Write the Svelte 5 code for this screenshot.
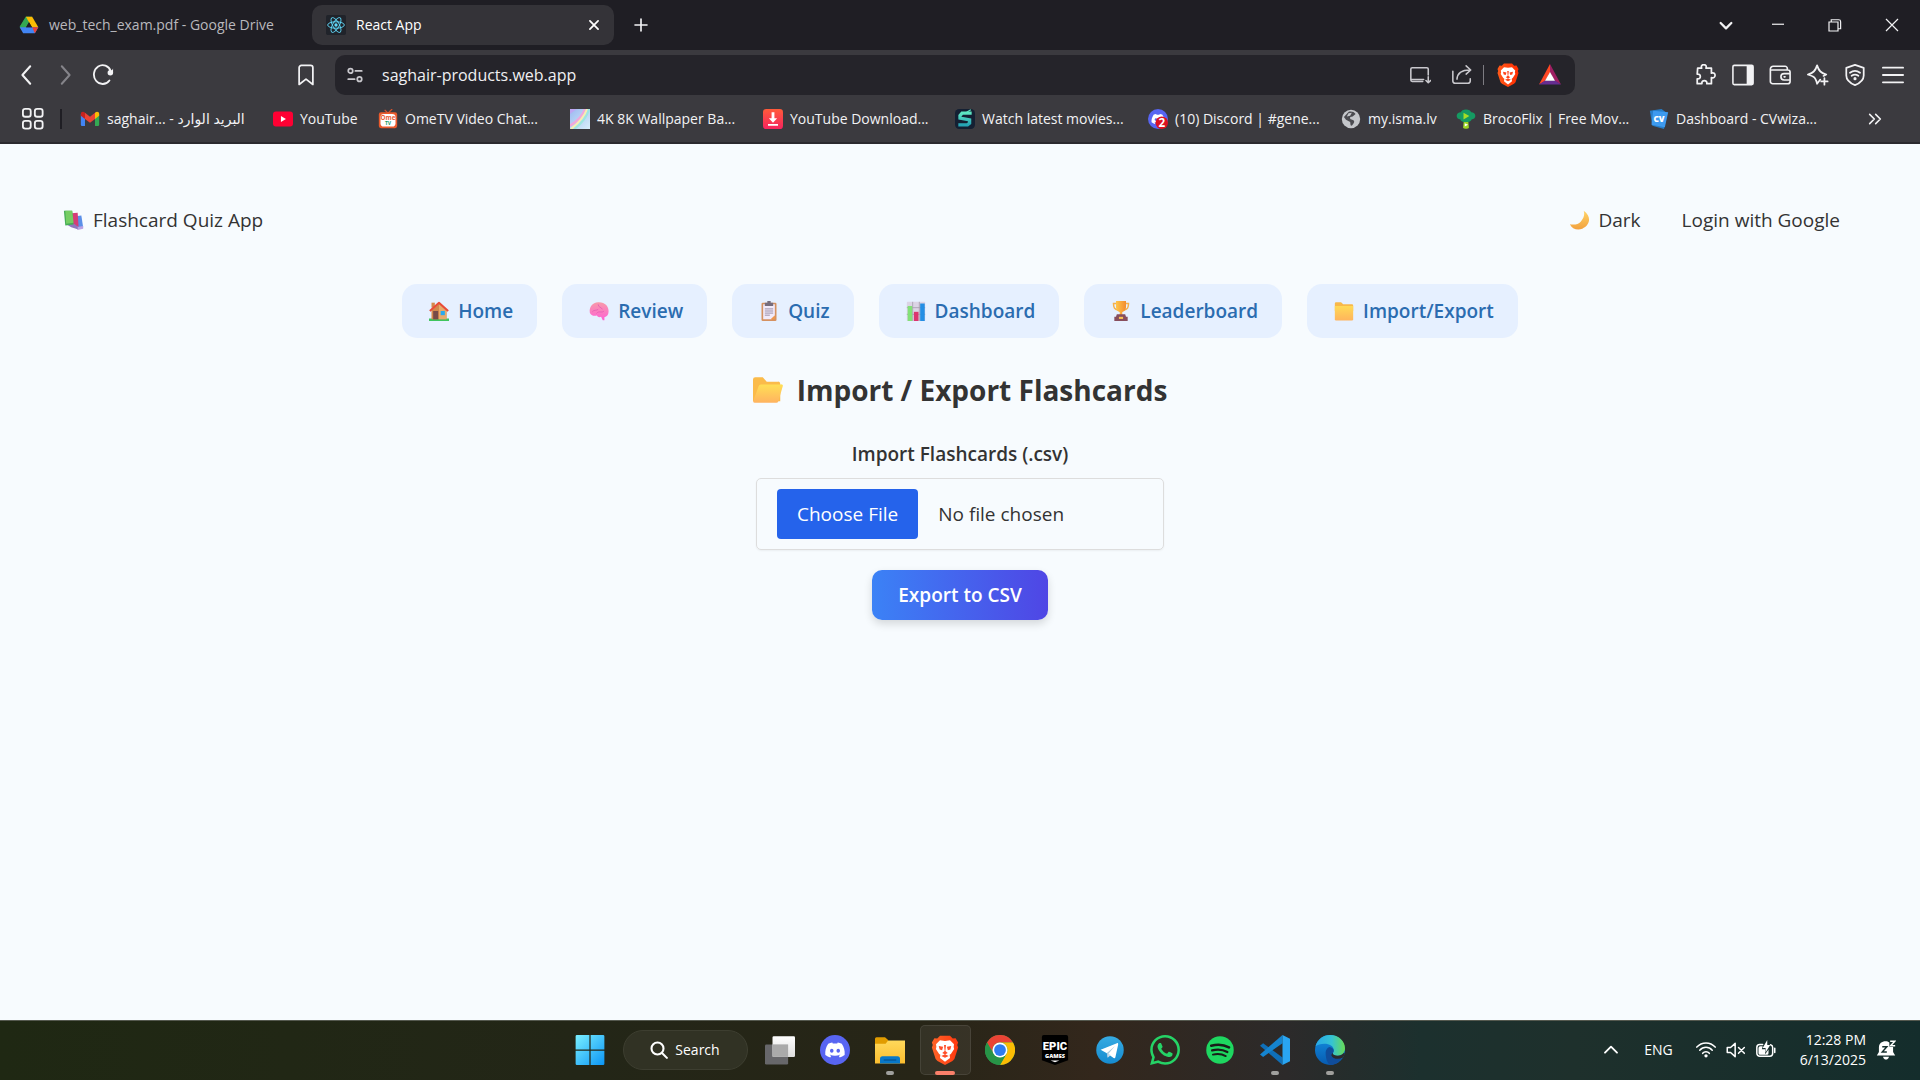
<script>
  const discordPath = 'M20.317 4.37a19.79 19.79 0 00-4.885-1.515.074.074 0 00-.079.037c-.21.375-.444.865-.608 1.25-1.845-.276-3.68-.276-5.487 0-.164-.393-.406-.874-.618-1.25a.077.077 0 00-.078-.037 19.736 19.736 0 00-4.885 1.515.07.07 0 00-.032.028C.533 9.046-.319 13.58.099 18.058a.082.082 0 00.031.056c2.053 1.508 4.041 2.423 5.993 3.03a.078.078 0 00.084-.028c.462-.63.873-1.295 1.226-1.994a.076.076 0 00-.042-.106c-.652-.248-1.274-.55-1.872-.892a.077.077 0 01-.007-.128c.126-.094.251-.192.372-.291a.074.074 0 01.077-.011c3.928 1.793 8.18 1.793 12.061 0a.074.074 0 01.079.01c.12.099.246.198.373.292a.077.077 0 01-.007.128 12.299 12.299 0 01-1.873.891.077.077 0 00-.041.107c.36.698.772 1.363 1.225 1.993a.076.076 0 00.084.029c1.961-.607 3.95-1.522 6.002-3.03a.077.077 0 00.032-.055c.5-5.177-.838-9.674-3.549-13.66a.061.061 0 00-.031-.029zM8.02 15.331c-1.183 0-2.157-1.086-2.157-2.419s.956-2.419 2.157-2.419c1.211 0 2.176 1.095 2.157 2.419 0 1.333-.956 2.419-2.157 2.419zm7.975 0c-1.183 0-2.157-1.086-2.157-2.419s.955-2.419 2.157-2.419c1.211 0 2.176 1.095 2.157 2.419 0 1.333-.946 2.419-2.157 2.419z';
  const line = 'fill="none" stroke="currentColor" stroke-linecap="round" stroke-linejoin="round"';
  const discord = `<circle cx="12" cy="12" r="12" fill="#5865f2"/><path transform="translate(4.2 4.2) scale(.65)" fill="#fff" d="${discordPath}"/>`;

  const icons = {
    drive: '<path fill="#188038" d="M8.2 2h3.9L6.3 21.5 1 13.8z"/><path fill="#34a853" d="M8.2 2h7.6L5.2 20.8.8 14z"/><path fill="#fbbc04" d="M8.2 2h7.6L23.2 14.6h-7.6z"/><path fill="#4285f4" d="M.8 14.6h22.4L19 22H5z"/><path fill="#ea4335" d="M15.8 14.6h7.4L19 22z"/><path fill="#1f1e24" d="M12 8.6l3.6 6H8.4z"/>',
    react: '<rect width="24" height="24" rx="2" fill="#20232a"/><g fill="none" stroke="#61dafb" stroke-width="1.1"><ellipse cx="12" cy="12" rx="10" ry="3.9"/><ellipse cx="12" cy="12" rx="10" ry="3.9" transform="rotate(60 12 12)"/><ellipse cx="12" cy="12" rx="10" ry="3.9" transform="rotate(120 12 12)"/></g><circle cx="12" cy="12" r="2" fill="#61dafb"/>',
    tabclose: `<path ${line} stroke-width="3" d="M5 5l14 14M19 5L5 19"/>`,
    plus: `<path ${line} stroke-width="2.2" d="M12 4v16M4 12h16"/>`,
    chevdown: `<path ${line} stroke-width="3.4" d="M4 9l8 8 8-8"/>`,
    minimize: '<path fill="none" stroke="currentColor" stroke-width="1.6" d="M4 11h16"/>',
    restore: '<path fill="none" stroke="currentColor" stroke-width="1.6" d="M4 8h12v12H4zM7 8V5h10a2.5 2.5 0 012.5 2.5V17H16"/>',
    close: '<path fill="none" stroke="currentColor" stroke-width="1.6" d="M4 4l16 16M20 4L4 20"/>',
    back: `<path ${line} stroke-width="2.2" d="M15.5 2.5L7 12l8.5 9.5"/>`,
    forward: `<path ${line} stroke-width="2.2" d="M8.5 2.5L17 12l-8.5 9.5"/>`,
    reload: `<path ${line} stroke-width="2" d="M19 18A9.5 10.3 0 1120.500 8"/><circle cx="20" cy="9.5" r="3" fill="currentColor"/><path fill="currentColor" d="M20 9.5h3V5z"/>`,
    bookmark: `<path ${line} stroke-width="1.9" d="M4.500 4A2.5 2.5 0 017 1.5h10A2.5 2.5 0 0119.500 4v18.3L12 16.5l-7.500 5.8z"/>`,
    tune: `<g ${line} stroke-width="2.3"><circle cx="6" cy="6.5" r="3"/><path d="M12.5 6.5H21M3 17.5h8.5"/><circle cx="18" cy="17.5" r="3"/></g>`,
    install: `<path ${line} stroke-width="1.7" d="M15 19H3.5A1.5 1.5 0 012 17.5v-12A1.5 1.5 0 013.500 4h16A1.5 1.500 0 0121 5.5V12M2 17h14M21 14v6M18.5 18l2.5 2.5 2.5-2.5"/>`,
    share: `<path ${line} stroke-width="1.7" d="M2 8v10.5A2.5 2.5 0 004.500 21h14a2.5 2.5 0 002.5-2.5V16M6.500 16.5C7 10 11 6.500 20.5 6.500M16.5 2l5 4.500-5 4.5"/>`,
    brave: '<defs><linearGradient id="brave-fill"><stop offset="0" stop-color="#ff5a1a"/><stop offset="1" stop-color="#ff2c00"/></linearGradient></defs><path fill="url(#brave-fill)" d="M8 .5h8l2.2 2.3 2.3-.3L22.500 6l-.7 2 .7 2-3 9.2-1.5 1.6-6 3.2-6-3.2-1.5-1.6-3-9.2.7-2-.7-2 2-3.500 2.3.3z"/><path fill="#fff" d="M12 4.700l4-.5 3.200 3.200-.3 2.200.4 1.500-2.600 4-1 .6.3 2.600-4 3.100-4-3.100.3-2.600-1-.6-2.600-4 .4-1.500-.3-2.200L8 4.200z"/><path fill="#ff431a" d="M7 8.700l3.500.7-.8 2.700-2-.5zM17 8.700l-3.500.7.8 2.700 2-.5zM11.200 8h1.600l-.5 4.700 1.900 1.600-2.200 1.200-2.200-1.200 1.900-1.600zM9 16.700l3-1.300 3 1.300-3 1.500z"/>',
    bat: '<path fill="#ff4724" d="M12 1L1 21.5l6-3.500 5-8.500z"/><path fill="#9e1f63" d="M12 1l11 20.500-6-3.500-5-8.500z"/><path fill="#662d91" d="M1 21.500h22L17 17.500H7z"/><path fill="#fff" d="M12 9l5 8.700H7z"/>',
    puzzle: `<path ${line} stroke-width="1.9" d="M4 4.500h4.300c-.8-2.600.5-3.800 2.400-3.800s3.200 1.200 2.400 3.800H19V10c2.600-.8 4 .5 4 2.400s-1.400 3.200-4 2.400v6.700h-5c.3-2.500-1-3.400-2.700-3.400s-3 .9-2.700 3.400H3.500v-5.200c2.300.3 3.400-.9 3.400-2.600s-1.100-3-3.400-2.600z"/>`,
    sidebar: '<rect x="1" y="1.5" width="22" height="21" rx="1.5" fill="none" stroke="currentColor" stroke-width="1.7"/><path fill="currentColor" d="M16 1.500h7v21h-7z"/>',
    wallet: `<path ${line} stroke-width="1.8" d="M20 6.500V5a2.5 2.5 0 00-2.5-2.5h-13A3 3 0 001.5 5.5v13.5A2.5 2.5 0 004 21.500h16.5A2.5 2.5 0 0023 19V9a2.5 2.5 0 00-2.500-2.500H3M23 10.500h-6.5a3.5 3.5 0 000 7H23M16.500 14h1"/>`,
    sparkle: `<path ${line} stroke-width="1.9" d="M14.500 17L11 21.500c-1-3.800-1.500-6-4-7.500-1.500-1-3.700-1.700-6-2.500 5.700-2 8-3.500 10-10 2 6.500 4.300 8 10 10l-3 1.500M19 15.500v7M15.500 19h7"/>`,
    vpn: `<g ${line} stroke-width="1.9"><path d="M12 1l9.500 3.300v8.200c0 4.700-4.500 8.500-9.500 10.500-5-2-9.500-5.800-9.500-10.500V4.300z"/><path d="M6.500 9.500c3.500-2.500 7.500-2.500 11 0M8.300 12.800c2.300-1.600 5.100-1.600 7.400 0"/></g><circle cx="12" cy="16" r="1.700" fill="currentColor"/>`,
    menu: '<path stroke="currentColor" stroke-width="2" stroke-linecap="round" d="M1 4h22M1 12h22M1 20h22"/>',
    grid: '<g fill="none" stroke="currentColor" stroke-width="2"><rect x="1" y="1" width="8.5" height="8.5" rx="2.5"/><rect x="14" y="1" width="8.5" height="8.5" rx="2.5"/><rect x="1" y="14" width="8.5" height="8.5" rx="2.5"/><rect x="14" y="14" width="8.5" height="8.5" rx="2.5"/></g>',
    more: `<path ${line} stroke-width="2.4" d="M4 5l7 7-7 7M13 5l7 7-7 7"/>`,
    gmail: '<path fill="#4285f4" d="M1 6v13a1.5 1.5 0 001.500 1.500H6V10z"/><path fill="#34a853" d="M18 10v10.500h3.500A1.500 1.5 0 0023 19V6z"/><path fill="#ea4335" d="M6 4.500l6 4.700 6-4.700V12l-6 4.500L6 12z"/><path fill="#c5221f" d="M1 6c0-2.600 2.800-3.600 5-1.500V12L1 8z"/><path fill="#fbbc04" d="M23 6c0-2.600-2.800-3.600-5-1.500V12l5-4z"/>',
    youtube: '<rect x="0" y="3" width="24" height="18" rx="3.5" fill="#f03"/><path fill="#fff" d="M9.500 8.500l6 3.500-6 3.500z"/>',
    ometv: '<path stroke="#d8532c" stroke-width="1.5" fill="none" d="M8 1l4 4 5-5"/><rect x="1" y="4" width="22" height="19" rx="2.5" fill="#ea5a2c"/><rect x="3" y="6" width="18" height="15" rx="4" fill="#fff"/><text x="12" y="13.5" text-anchor="middle" font-family="Open Sans, sans-serif" font-size="7.5" font-weight="700" fill="#e95c36">Ome</text><text x="12" y="19.5" text-anchor="middle" font-family="Open Sans, sans-serif" font-size="6" font-weight="700" fill="#169b67">TV</text>',
    wallpaper: '<defs><linearGradient id="sky" x2="1" y2="1"><stop offset="0" stop-color="#9bb9f0"/><stop offset="1" stop-color="#d8eefb"/></linearGradient></defs><rect width="24" height="24" fill="url(#sky)"/><path fill="none" stroke="#eea7dc" stroke-width="3" d="M0 20C7 16 15 9 18 0"/><path fill="none" stroke="#f6eeb0" stroke-width="2.5" d="M1 24C9 18 17 10 20.500 0"/><path fill="none" stroke="#9ce7df" stroke-width="2.5" d="M5 24C12 19 20 10 23 0"/><path fill="#bea6f2" d="M0 6l8-6H0z"/>',
    download: '<defs><linearGradient id="dl" x2="0" y2="1"><stop stop-color="#ff5b3a"/><stop offset="1" stop-color="#f5245e"/></linearGradient></defs><rect width="24" height="24" rx="4" fill="url(#dl)"/><path fill="#fff" d="M10.300 4h3.400v7H17l-5 5.500L7 11h3.300zM6 18h12v2H6z"/>',
    watch: '<defs><linearGradient id="ws" x2="0" y2="1"><stop stop-color="#5ee6c1"/><stop offset="1" stop-color="#25a4b5"/></linearGradient></defs><rect width="24" height="24" rx="5" fill="#142033"/><path fill="none" stroke="url(#ws)" stroke-width="4" d="M20 5H8.500L6 8v3l11.500 2v4L15 19H4"/><path stroke="#5ee6c1" stroke-width="1.5" d="M14 4l5-3"/>',
    discord,
    discordBadge: discord + '<circle cx="16.5" cy="16.5" r="7.5" fill="#dd1220"/><text x="16.5" y="21.5" text-anchor="middle" font-family="Open Sans, sans-serif" font-size="14" font-weight="700" fill="#fff">2</text>',
    globe: '<circle cx="12" cy="12" r="11" fill="#c4c6ca"/><path fill="#4b4b50" d="M9 3.500c3-1 7 0 8.500 2.500L14 9l-3 .5v2.500l4 1.500c2 2 0 4-2 6.500l-1.500-.5-.5-4L6 13 3.500 9.500z"/><path fill="#c4c6ca" d="M9 5l4-.5-2 3.500-4 1z"/>',
    broco: '<path fill="#9bd423" d="M9.500 13h5l1 9.500c-1 1.500-6 1.500-7 0z"/><path fill="#159a62" d="M12 .5c3.500 0 5.500 1.500 6.200 3.500 3 0 5 2 5 4.500 0 2.300-2 4-4.500 4-.7 2.300-3 3-6.700 3s-6-.7-6.700-3c-2.500 0-4.500-1.700-4.500-4C.8 6 2.800 4 5.800 4 6.500 2 8.500.5 12 .5z"/><path fill="#a6dd26" d="M9 4.500l7 4-7 4z"/><path fill="#fff" d="M10.500 17l4 2-4 2z"/>',
    cv: '<path fill="#277dc7" d="M1 2l14-2 7 5-4 19L4 20z"/><path fill="#3d9aef" d="M5 2l18 2-4 18-16-3z"/><text x="12" y="16" text-anchor="middle" font-family="Open Sans, sans-serif" font-size="10" font-weight="800" fill="#fff">CV</text>',
    books: '<path fill="#5b8fe8" d="M14 8l6-1 2 13-6 1.500z"/><path fill="#b9a2e4" d="M14 20l8-1.500v3L16 23z"/><path fill="#d43e76" d="M9 4.500l7-.5 1 15-6 1z"/><path fill="#8f74bd" d="M4 17l8-1 4 3v3l-7-2z"/><path fill="#45ad57" d="M1 2h9l1.500 15-9 1z"/><path fill="#75cd63" d="M2.500 2H10l1.500 13-8 1z"/>',
    moon: '<defs><linearGradient id="mn" x2="0" y2="1"><stop stop-color="#ffd467"/><stop offset="1" stop-color="#f2a13f"/></linearGradient></defs><path fill="url(#mn)" d="M16 2c9 6 7 16-1.500 19.500C9 23.500 3 21.500 1 16.500c4 1 9 .5 12-3S17.500 6 16 2z"/>',
    home: '<path fill="#3fc55e" d="M0 21h24v3H0z"/><path fill="#d3884c" d="M3 11l9-8 9 8v11H3z"/><path fill="#e8aa6b" d="M12 4l9 8v10h-9z"/><path fill="#d3884c" d="M3 2h4v6H3z"/><path fill="#774b48" d="M5 12h6v10H5z"/><path fill="#29a9f0" d="M14 12h5v5h-5z"/><path fill="none" stroke="#e94b38" stroke-width="2.3" stroke-linejoin="round" d="M1 12L12 2l11 10"/>',
    brain: '<defs><linearGradient id="br" x2="0" y2="1"><stop stop-color="#f79aa9"/><stop offset="1" stop-color="#ff62d4"/></linearGradient></defs><path fill="url(#br)" d="M1 14C0 7 4 2 11 1.500c8-.5 13 5 12.500 11.500-.3 4-2 6-5 6.500v3.500h-2l-2-4c-2 1-4 .5-5-1.500-4 1-7.500-.5-8.500-3.500z"/><path fill="none" stroke="#e45db4" stroke-width="1" d="M4 13c2-3 5-1 7-3M11 4c0 4 4 3 5 6M9 15c3-4 6 0 9-3"/>',
    clipboard: '<rect x="3" y="2" width="18" height="22" rx="1.5" fill="#d59160"/><path fill="#f1eafa" d="M5 4h14v14l-4 4H5z"/><path fill="#ef974b" d="M19 17v5h-5z"/><path fill="#766d7d" d="M7 2h3V0h4v2h3v4H7z"/><path stroke="#9c91a9" stroke-width="1.2" d="M7 9.500h10M7 12h10M7 14.500h10M7 17h6"/>',
    chart: '<rect x="1" y="1" width="22" height="23" rx="1" fill="#dbd4e5"/><path stroke="#a69eae" stroke-width="1" d="M1 8h22M1 16h22M8 1v23M16 1v23"/><path fill="#83e178" d="M2 6h5.500v18H2z"/><path fill="#dc356f" d="M9.500 13H15v11H9.500z"/><path fill="#248ee4" d="M17 3h5.500v21H17z"/>',
    trophy: '<defs><linearGradient id="tp"><stop stop-color="#ffc64a"/><stop offset="1" stop-color="#f28c30"/></linearGradient></defs><path fill="none" stroke="#f4b14c" stroke-width="1.8" d="M7 3H3c0 5 1 7 6 8M17 3h4c0 5-1 7-6 8"/><path fill="url(#tp)" d="M6 0h12v7c0 4-2.500 5.500-4.500 6.500V17h-3v-3.500C8.500 12.500 6 11 6 7z"/><path fill="#874e5d" d="M7 16h10l1 3h2v5H4v-5h2z"/><path fill="#ffc553" d="M9.500 19h5v2.500h-5z"/>',
    folder: '<defs><linearGradient id="fd" x2="0" y2="1"><stop stop-color="#ffda55"/><stop offset="1" stop-color="#ffb45d"/></linearGradient></defs><path fill="#f8b84a" d="M1 3a1.500 1.500 0 011.500-1.500h6L11 4h10.500A1.500 1.500 0 0123 5.500V12H1z"/><path fill="url(#fd)" d="M1 6h22v16a1.500 1.500 0 01-1.500 1.500h-19A1.500 1.500 0 011 22z"/>',
    folderOpen: '<defs><linearGradient id="fo" x2="0" y2="1"><stop stop-color="#ffdf55"/><stop offset="1" stop-color="#ffb360"/></linearGradient></defs><path fill="#fbbb4a" d="M0 3.500A1.800 1.800 0 011.800 1.700h6L11 5.300h9A1.800 1.800 0 0121.800 7v14H0z"/><path fill="url(#fo)" d="M6.300 7.500h16.500a1 1 0 011 1.400l-3.500 12a1.800 1.800 0 01-1.700 1.300H1.500a1.300 1.300 0 01-1.200-1.700L4.500 9a2 2 0 011.800-1.500z"/>',
    windows: '<defs><linearGradient id="wn" x1="0" y1="0" x2="24" y2="24" gradientUnits="userSpaceOnUse"><stop stop-color="#7bf0ff"/><stop offset="1" stop-color="#0a94f5"/></linearGradient></defs><path fill="url(#wn)" d="M.5 1a1 1 0 011-1h10v11.500H.5zM12.500 0h10a1 1 0 011 1v10.500h-11zM.5 12.500h11V24h-10a1 1 0 01-1-1zM12.500 12.500h11V23a1 1 0 01-1 1h-10z"/>',
    search: `<g ${line} stroke-width="2.8"><circle cx="10" cy="10" r="8"/><path d="M16 16l6.500 6.500"/></g>`,
    taskview: '<defs><linearGradient id="tv" x2="0" y2="1"><stop stop-color="#fff"/><stop offset="1" stop-color="#dedede"/></linearGradient></defs><rect x="0" y="7.5" width="18.5" height="16" rx="1" fill="#67676a"/><rect x="6" y="1" width="18" height="16.5" rx="1" fill="url(#tv)"/><path fill="#aaa" d="M6 7.500h12.500v10H6z"/>',
    explorer: '<defs><linearGradient id="ex" x2="0" y2="1"><stop stop-color="#ffd95b"/><stop offset="1" stop-color="#fbbd2f"/></linearGradient></defs><path fill="#e19c00" d="M0 3a1.200 1.200 0 011.200-1.200H8L10.500 4v5H0z"/><path fill="url(#ex)" d="M0 7h8.500L10.500 4.300H24v18.500H0z"/><path fill="#0878c9" d="M4 19a2 2 0 012-2h12a2 2 0 012 2v3.800H4z"/><path stroke="#064f8c" stroke-width=".9" d="M7 20h10"/>',
    chrome: '<circle cx="12" cy="12" r="12" fill="#34a853"/><path fill="#ea4335" d="M1.600 6A12 12 0 0122.400 6H12a6 6 0 00-5.200 9z"/><path fill="#fbbc04" d="M22.400 6A12 12 0 0112 24l5.200-9A6 6 0 0012 6z"/><path fill="#279447" d="M1.600 6A12 12 0 0012 24l5.200-9a6 6 0 01-10.400 0z"/><circle cx="12" cy="12" r="6" fill="#fff"/><circle cx="12" cy="12" r="4.700" fill="#2f7cf0"/>',
    epic: '<path fill="#000" d="M1.500 1.500A1.500 1.500 0 013 0h18a1.500 1.500 0 011.500 1.500v18.700L12 24 1.500 20.200z"/><text x="12" y="12" text-anchor="middle" font-family="Roboto, sans-serif" font-size="9" font-weight="900" fill="#fff">EPIC</text><text x="12" y="18" text-anchor="middle" font-family="Open Sans, sans-serif" font-size="4.500" font-weight="800" fill="#fff">GAMES</text><path fill="#fff" d="M8.500 20.300h7L12 21.700z"/>',
    telegram: '<defs><linearGradient id="tg" x2="0" y2="1"><stop stop-color="#36abe2"/><stop offset="1" stop-color="#168bd0"/></linearGradient></defs><circle cx="12" cy="12" r="11" fill="url(#tg)"/><path fill="#fff" d="M4.500 11.800L17.500 6.500c.7-.2 1.200.2 1 1.200l-2.200 10.100c-.2.8-.7 1-1.400.6L9.500 14.500z"/><path fill="#c8daea" d="M9.500 14.500l.6 3.700 2.500-2.300z"/><path fill="#a9c9dd" d="M9.500 14.300l6.500-5.600-5.300 6.200-.6 3.300z"/>',
    whatsapp: '<path fill="#25d366" d="M17.472 14.382c-.297-.149-1.758-.867-2.030-.967-.273-.099-.471-.148-.670.150-.197.297-.767.966-.940 1.164-.173.199-.347.223-.644.075-.297-.150-1.255-.463-2.390-1.475-.883-.788-1.480-1.761-1.653-2.059-.173-.297-.018-.458.130-.606.134-.133.298-.347.446-.520.149-.174.198-.298.298-.497.099-.198.050-.371-.025-.520-.075-.149-.669-1.612-.916-2.207-.242-.579-.487-.500-.669-.510-.173-.008-.371-.010-.570-.010-.198 0-.520.074-.792.372-.272.297-1.040 1.016-1.040 2.479 0 1.462 1.065 2.875 1.213 3.074.149.198 2.096 3.200 5.077 4.487.709.306 1.262.489 1.694.625.712.227 1.360.195 1.871.118.571-.085 1.758-.719 2.006-1.413.248-.694.248-1.289.173-1.413-.074-.124-.272-.198-.570-.347m-5.421 7.403h-.004a9.870 9.870 0 01-5.031-1.378l-.361-.214-3.741.982.998-3.648-.235-.374a9.860 9.860 0 01-1.510-5.260c.001-5.450 4.436-9.884 9.888-9.884 2.640 0 5.122 1.030 6.988 2.898a9.825 9.825 0 012.893 6.994c-.003 5.450-4.437 9.884-9.885 9.884m8.413-18.297A11.815 11.815 0 0012.050 0C5.495 0 .160 5.335.157 11.892c0 2.096.547 4.142 1.588 5.945L.057 24l6.305-1.654a11.882 11.882 0 005.683 1.448h.005c6.554 0 11.890-5.335 11.893-11.893a11.821 11.821 0 00-3.480-8.413z"/>',
    spotify: '<circle cx="12" cy="12" r="11" fill="#1ed760"/><g fill="none" stroke="#191d19" stroke-linecap="round"><path stroke-width="2.1" d="M5 8.600c4.700-1.300 10-1 14.200 1.300"/><path stroke-width="1.8" d="M5.700 12.300c4.300-1.200 8.600-.7 12.200 1.300"/><path stroke-width="1.5" d="M6.300 15.700c3.700-.9 7.200-.6 10.300 1.200"/></g>',
    vscode: '<path fill="#0f6fb8" d="M0 8.500L2.500 6.500 18 18v6z"/><path fill="#1584cf" d="M0 15.500L18 0v6.500L2.500 17.500z"/><path fill="#29a5f2" d="M18 0l6 3v18l-6 3z"/>',
    edge: '<defs><linearGradient id="eg"><stop stop-color="#28a8e8"/><stop offset=".55" stop-color="#35c3d3"/><stop offset="1" stop-color="#69db54"/></linearGradient><linearGradient id="eb" x2="0" y2="1"><stop stop-color="#138fe1"/><stop offset="1" stop-color="#075bb0"/></linearGradient></defs><circle cx="12" cy="12" r="12" fill="url(#eb)"/><path fill="url(#eg)" d="M.4 9C2 3.500 6.500 0 12 0c7 0 12 5 12 10.500 0 4-3 6-6.500 6-2 0-3.500-.5-3.500-1.500 0-.8 1-1.300 1-3C15 9 11.500 7 7.500 7 4.500 7 2 8 .4 9z"/><path fill="#104d9b" d="M8.500 14c0-2 1.500-4 3-4.500 2 .3 3.500 1.300 3.500 3 0 1-.8 1.800-.8 2.600 0 1.200 1.500 1.900 3.300 1.900 2.200 0 3.500-.5 5-1.500C21 20.500 17 24 12 24c-2-1.500-3.500-5-3.500-10z"/><path fill="#2b2a2b" d="M14.200 14.300c0 1.500 2 2.200 3.800 2.200 2.300 0 4-.9 5-2.200l1 .5-1.500 3.200c-4 2-8.500.7-9.300-1.500-.3-1 .4-1.500 1-2.200z"/>',
    chevup: `<path ${line} stroke-width="2.8" d="M3 16l9-9 9 9"/>`,
    wifi: `<g ${line} stroke-width="1.8"><path d="M1 8.500C7 2 17 2 23 8.500M4.500 12.200c4-4.500 11-4.500 15 0M8 16c2-2.500 6-2.500 8 0"/></g><circle cx="12" cy="19" r="2" fill="currentColor"/>`,
    mute: `<path ${line} stroke-width="1.8" d="M1.500 9h4L11 4v16l-5.500-5h-4zM15 9l7 7M22 9l-7 7"/>`,
    battery: `<path ${line} stroke-width="1.8" d="M8 5.500H4.500A3.500 3.500 0 001 9v7a3.500 3.500 0 003.500 3.500h12A3.500 3.500 0 0020 16V9a3.500 3.500 0 00-2.500-3.400M22.500 10v5"/><path fill="currentColor" d="M3 9.500a2 2 0 012-2h3L7 11h4v6l4-5.500V16a1.800 1.800 0 01-1.800 1.800H5A2 2 0 013 15.800zM13.500 0L8 9.500h3.500V15L17 6h-3.500z"/>`,
    bell: '<path fill="currentColor" d="M1 18.500l2.500-4V9C3.500 4 7 1.500 11.500 1.500c2 0 3 .5 4.500 1.500v5.500h4.500v6l2.500 4zM8.500 20h7c-.5 4.500-6.500 4.500-7 0z"/><path fill="none" stroke="#17302f" stroke-width="1.8" d="M7.500 8h5.500l-5.500 6.500H13"/><path fill="none" stroke="currentColor" stroke-width="1.8" d="M17 1.500h5.500L17.500 7H23"/>'
  };

  const bookmarks = [
    { icon: 'gmail', label: 'saghair... - البريد الوارد', width: 193 },
    { icon: 'youtube', label: 'YouTube', width: 105 },
    { icon: 'ometv', label: 'OmeTV Video Chat...', width: 192 },
    { icon: 'wallpaper', label: '4K 8K Wallpaper Ba...', width: 193 },
    { icon: 'download', label: 'YouTube Download...', width: 192 },
    { icon: 'watch', label: 'Watch latest movies...', width: 193 },
    { icon: 'discordBadge', label: '(10) Discord | #gene...', width: 193 },
    { icon: 'globe', label: 'my.isma.lv', width: 115 },
    { icon: 'broco', label: 'BrocoFlix | Free Mov...', width: 193 },
    { icon: 'cv', label: 'Dashboard - CVwiza...', width: 193 }
  ];

  const nav = [
    { icon: 'home', label: 'Home' },
    { icon: 'brain', label: 'Review' },
    { icon: 'clipboard', label: 'Quiz' },
    { icon: 'chart', label: 'Dashboard' },
    { icon: 'trophy', label: 'Leaderboard' },
    { icon: 'folder', label: 'Import/Export' }
  ];

  const extensions = [
    ['puzzle', 'Extensions'], ['sidebar', 'Sidebar'], ['wallet', 'Wallet'],
    ['sparkle', 'Leo AI'], ['vpn', 'VPN'], ['menu', 'Menu']
  ];

  const apps = [
    { icon: 'taskview', name: 'Task view' },
    { icon: 'discord', name: 'Discord' },
    { icon: 'explorer', name: 'File Explorer', open: true },
    { icon: 'brave', name: 'Brave', active: true },
    { icon: 'chrome', name: 'Chrome' },
    { icon: 'epic', name: 'Epic Games' },
    { icon: 'telegram', name: 'Telegram' },
    { icon: 'whatsapp', name: 'WhatsApp' },
    { icon: 'spotify', name: 'Spotify' },
    { icon: 'vscode', name: 'Visual Studio Code', open: true },
    { icon: 'edge', name: 'Edge', open: true }
  ];

  let address = $state('saghair-products.web.app');
</script>

{#snippet icon(name, size)}
  <svg class="icon {size}" viewBox="0 0 24 24" aria-hidden="true">{@html icons[name]}</svg>
{/snippet}

<div class="screen">
  <header class="browser">
    <div class="tabs">
      <button class="tab" type="button">{@render icon('drive', 's20')}<span>web_tech_exam.pdf - Google Drive</span></button>
      <div class="tab current">
        <button class="tab-name" type="button">{@render icon('react', 's20')}<span>React App</span></button>
        <button class="tab-close" type="button" aria-label="Close tab">{@render icon('tabclose', 's14')}</button>
      </div>
      <button class="new-tab" type="button" aria-label="New tab">{@render icon('plus', 's18')}</button>
      <div class="window-buttons">
        <button class="search-tabs" type="button" aria-label="Search tabs">{@render icon('chevdown', 's16')}</button>
        <button type="button" aria-label="Minimize">{@render icon('minimize', 's18')}</button>
        <button type="button" aria-label="Restore">{@render icon('restore', 's18')}</button>
        <button type="button" aria-label="Close">{@render icon('close', 's18')}</button>
      </div>
    </div>

    <div class="toolbar">
      <div class="history">
        <button type="button" aria-label="Back">{@render icon('back', 's22')}</button>
        <button type="button" aria-label="Forward" disabled>{@render icon('forward', 's22')}</button>
        <button type="button" aria-label="Reload">{@render icon('reload', 's22')}</button>
        <button class="save" type="button" aria-label="Bookmark this page">{@render icon('bookmark', 's22')}</button>
      </div>
      <div class="address">
        <button type="button" aria-label="Site settings">{@render icon('tune', 's18')}</button>
        <input type="text" aria-label="Address" bind:value={address} />
        <button class="wide" type="button" aria-label="Install app">{@render icon('install', 's22')}</button>
        <button class="wide" type="button" aria-label="Share">{@render icon('share', 's22')}</button>
        <span class="rule"></span>
        <button class="wide" type="button" aria-label="Brave Shields">{@render icon('brave', 's24')}</button>
        <button class="wide" type="button" aria-label="Brave Rewards">{@render icon('bat', 's24')}</button>
      </div>
      <div class="extensions">
        {#each extensions as [name, label]}
          <button type="button" aria-label={label}>{@render icon(name, 's22')}</button>
        {/each}
      </div>
    </div>

    <nav class="bookmarks" aria-label="Bookmarks">
      <button class="groups" type="button" aria-label="Tab groups">{@render icon('grid', 's22')}</button>
      <span class="divider"></span>
      {#each bookmarks as mark}
        <a href="#bookmark" style="width: {mark.width}px">{@render icon(mark.icon, 's20')}<span>{mark.label}</span></a>
      {/each}
      <button class="overflow" type="button" aria-label="More bookmarks">{@render icon('more', 's16')}</button>
    </nav>
  </header>

  <main class="page">
    <div class="app-bar">
      <a class="brand" href="#home">{@render icon('books', 's22')}<span>Flashcard Quiz App</span></a>
      <div class="account">
        <button type="button">{@render icon('moon', 's22')}<span>Dark</span></button>
        <button type="button">Login with Google</button>
      </div>
    </div>

    <nav class="sections" aria-label="Sections">
      {#each nav as item}
        <a href="#{item.label}">{@render icon(item.icon, 's20')}<span>{item.label}</span></a>
      {/each}
    </nav>

    <section class="transfer">
      <h1>{@render icon('folderOpen', 's30')}<span>Import / Export Flashcards</span></h1>
      <label for="csv">Import Flashcards (.csv)</label>
      <input id="csv" type="file" accept=".csv" />
      <button class="export" type="button">Export to CSV</button>
    </section>
  </main>

  <footer class="taskbar">
    <div></div>
    <div class="apps">
      <button class="app" type="button" aria-label="Start">{@render icon('windows', 's30')}</button>
      <button class="search" type="button">{@render icon('search', 's18')}<span>Search</span></button>
      {#each apps as app}
        <button class="app" class:open={app.open} class:active={app.active} type="button" aria-label={app.name}>
          {@render icon(app.icon, 's30')}
        </button>
      {/each}
    </div>
    <div class="tray">
      <button class="chevron" type="button" aria-label="Show hidden icons">{@render icon('chevup', 's16')}</button>
      <button class="lang" type="button">ENG</button>
      <button class="status" type="button" aria-label="Network, sound and battery">
        {@render icon('wifi', 's20')}{@render icon('mute', 's20')}{@render icon('battery', 's20')}
      </button>
      <button class="clock" type="button"><span>12:28 PM</span><span>6/13/2025</span></button>
      <button class="bell" type="button" aria-label="Notifications">{@render icon('bell', 's20')}</button>
    </div>
  </footer>
</div>

<style>
  :global(body) {
    margin: 0;
  }

  .screen {
    display: flex;
    flex-direction: column;
    min-height: 100vh;
    font-family: "Open Sans", "DejaVu Sans", sans-serif;
    font-size: 14px;
    line-height: 20px;
    background: #f7fbfe;
  }

  button {
    display: flex;
    align-items: center;
    justify-content: center;
    padding: 0;
    border: 0;
    background: none;
    color: inherit;
    font: inherit;
    white-space: nowrap;
  }

  a {
    color: inherit;
    text-decoration: none;
    white-space: nowrap;
  }

  .icon {
    display: block;
    flex: none;
  }
  .s14 { width: 14px; height: 14px; }
  .s16 { width: 16px; height: 16px; }
  .s18 { width: 18px; height: 18px; }
  .s20 { width: 20px; height: 20px; }
  .s22 { width: 22px; height: 22px; }
  .s24 { width: 24px; height: 24px; }
  .s30 { width: 30px; height: 30px; }

  .browser {
    background: #3b3a3f;
    color: #f2f2f4;
    border-bottom: 2px solid #2b2a2f;
  }

  .tabs {
    display: flex;
    align-items: center;
    height: 50px;
    background: #1f1e24;
  }

  .tab {
    display: flex;
    align-items: center;
    justify-content: flex-start;
    gap: 10px;
    width: 293px;
    height: 40px;
    margin-left: 19px;
    color: #b9b8bd;
  }

  .tab.current {
    width: 302px;
    margin-left: 0;
    border-radius: 10px;
    background: #343338;
    color: #fff;
  }

  .tab-name {
    flex: 1;
    justify-content: flex-start;
    gap: 10px;
    padding-left: 14px;
  }

  .tab-close {
    width: 40px;
    height: 40px;
  }

  .new-tab {
    width: 54px;
    height: 40px;
  }

  .window-buttons {
    display: flex;
    margin-left: auto;
  }

  .window-buttons button {
    width: 57px;
    height: 50px;
  }

  .window-buttons .search-tabs {
    width: 46px;
  }

  .toolbar {
    display: flex;
    align-items: center;
    height: 50px;
  }

  .history {
    display: flex;
    gap: 8px;
    width: 335px;
    box-sizing: border-box;
    padding: 0 14px 0 12px;
  }

  .history button,
  .extensions button {
    width: 30px;
    height: 40px;
  }

  .history button:disabled {
    color: #85848a;
  }

  .history .save {
    margin-left: auto;
  }

  .address {
    display: flex;
    flex: 1;
    align-items: center;
    height: 40px;
    border-radius: 10px;
    background: #25242a;
    color: #c9c8cd;
  }

  .address button {
    width: 40px;
    height: 40px;
  }

  .address .wide {
    width: 42px;
  }

  .address .wide:last-child {
    margin-right: 4px;
  }

  .address input {
    flex: 1;
    min-width: 0;
    padding: 0 0 0 7px;
    border: 0;
    outline: 0;
    background: none;
    color: #f0f0f2;
    font: inherit;
    font-size: 16px;
  }

  .rule {
    width: 1px;
    height: 20px;
    margin-right: 3px;
    background: #7d7c82;
  }

  .extensions {
    display: flex;
    justify-content: space-between;
    width: 345px;
    box-sizing: border-box;
    padding: 0 12px 0 115px;
  }

  .bookmarks {
    display: flex;
    align-items: center;
    height: 38px;
    padding: 0 30px 4px 22px;
  }

  .divider {
    width: 2px;
    height: 20px;
    margin: 0 18px 0 16px;
    background: #1f1e24;
  }

  .bookmarks a {
    display: flex;
    align-items: center;
    gap: 7px;
  }

  .overflow {
    width: 30px;
    height: 30px;
    margin-left: auto;
  }

  .page {
    flex: 1;
    color: #333;
    font-size: 19px;
    line-height: 30px;
  }

  .app-bar {
    display: flex;
    justify-content: space-between;
    padding: 61px 80px 49px 63px;
  }

  .brand,
  .account,
  .account button {
    display: flex;
    align-items: center;
    gap: 8px;
  }

  .account {
    gap: 41px;
  }

  .sections {
    display: flex;
    justify-content: center;
    flex-wrap: wrap;
    gap: 25px;
  }

  .sections a {
    display: flex;
    align-items: center;
    gap: 9px;
    padding: 12px 24px 12px 27px;
    border-radius: 15px;
    background: #e6f0ff;
    color: #2b6cb0;
    font-weight: 600;
  }

  .transfer {
    display: flex;
    flex-direction: column;
    align-items: center;
    padding-top: 32px;
  }

  h1 {
    display: flex;
    align-items: center;
    gap: 14px;
    margin: 0 0 29px;
    font-size: 28px;
    font-weight: 700;
    line-height: 40px;
  }

  label {
    margin-bottom: 9px;
    font-weight: 600;
  }

  input[type="file"] {
    width: 408px;
    max-width: 100%;
    box-sizing: border-box;
    margin-bottom: 20px;
    padding: 10px 20px;
    border: 1px solid #ddd;
    border-radius: 5px;
    box-shadow: 0 1px 2px #0000000d;
    color: #333;
    font: inherit;
  }

  input[type="file"]::file-selector-button {
    margin-right: 20px;
    padding: 10px 20px;
    border: 0;
    border-radius: 4px;
    background: #2563eb;
    color: #fff;
    font: inherit;
  }

  .export {
    padding: 10px 26px;
    border-radius: 10px;
    background: linear-gradient(to right, #3b82f6, #4f46e5);
    box-shadow: 0 4px 8px #00000024;
    color: #fff;
    font-weight: 600;
  }

  .taskbar {
    display: grid;
    grid-template-columns: 1fr auto 1fr;
    height: 60px;
    background: linear-gradient(to right, #1f2813, #232617 30%, #272517 48%, #33271c 57%, #2c2a2a 67%, #1c302e 74%, #1e302c 82%, #142d2c);
    box-shadow: inset 0 1px 0 #55594f;
    color: #fff;
  }

  .apps,
  .tray {
    display: flex;
    align-items: center;
  }

  .app {
    position: relative;
    width: 55px;
    height: 50px;
  }

  .app.open::after,
  .app.active::after {
    content: "";
    position: absolute;
    bottom: 0;
    left: 50%;
    width: 8px;
    height: 4px;
    border-radius: 2px;
    background: #a0a09d;
    transform: translateX(-50%);
  }

  .app.active::after {
    width: 20px;
    background: #fa806a;
  }

  .app.active::before {
    content: "";
    position: absolute;
    inset: 0 2px;
    border: 1px solid #ffffff16;
    border-radius: 5px;
    box-sizing: border-box;
    background: #ffffff10;
  }

  .search {
    gap: 7px;
    width: 125px;
    height: 40px;
    margin: 0 5px;
    border: 1px solid #3d3e30;
    border-radius: 20px;
    background: #313224;
  }

  .tray {
    justify-content: flex-end;
    padding-right: 24px;
  }

  .chevron {
    margin-right: 25px;
  }

  .lang {
    margin-right: 23px;
  }

  .status {
    gap: 10px;
    margin-right: 24px;
  }

  .clock {
    flex-direction: column;
    align-items: flex-end;
    margin-right: 10px;
  }
</style>
